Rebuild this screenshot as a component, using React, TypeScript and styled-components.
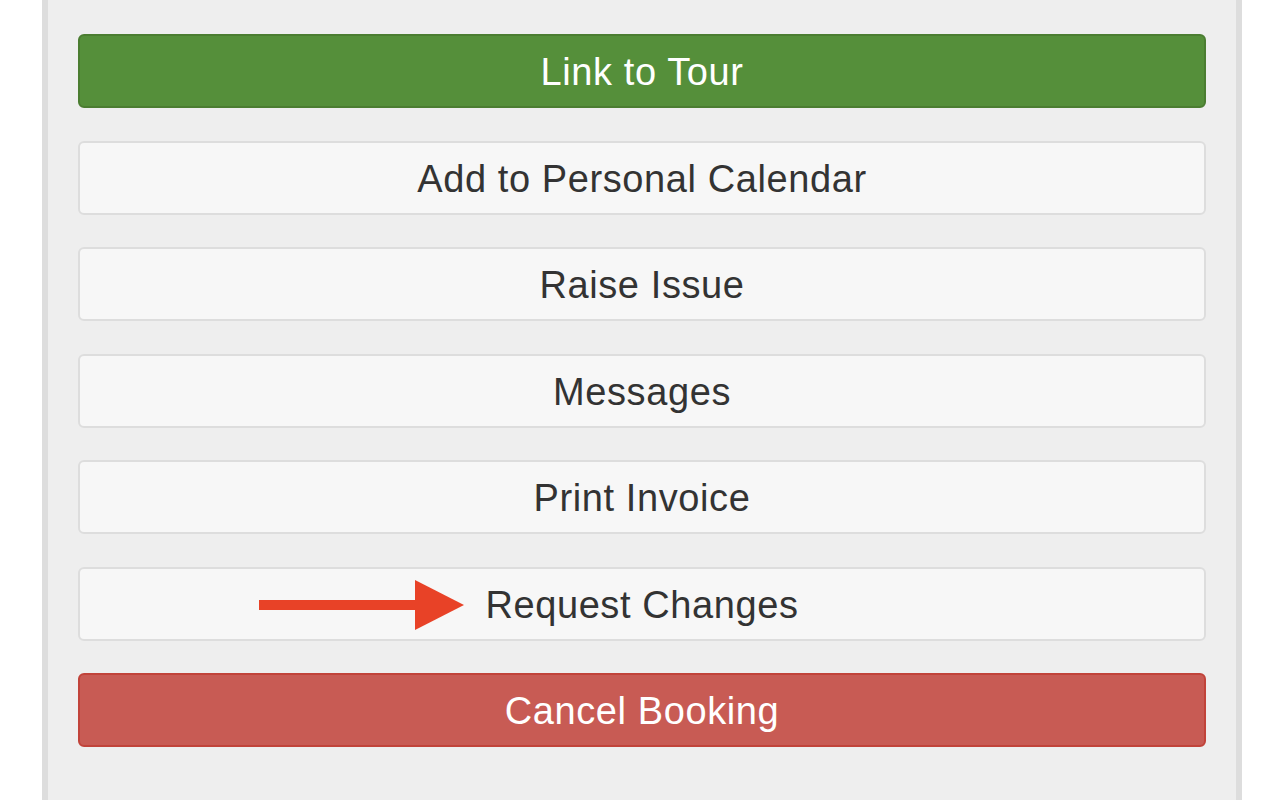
import React from "react";
import styled, { createGlobalStyle } from "styled-components";

const Global = createGlobalStyle`
  html, body { margin: 0; padding: 0; background: #ffffff; }
  body { font-family: "Liberation Sans", Arial, Helvetica, sans-serif; }
`;

const Page = styled.div`
  width: 1284px;
  height: 800px;
  display: flex;
  overflow: hidden;
  padding-left: 42px;
  box-sizing: border-box;
`;

const Panel = styled.div`
  width: 1200px;
  height: 800px;
  box-sizing: border-box;
  background: #eeeeee;
  border-left: 6px solid #dddddd;
  border-right: 6px solid #dddddd;
  padding: 34px 30px 0 30px;
  display: flex;
  flex-direction: column;
  gap: 32.5px;
`;

type Variant = "success" | "default" | "danger";

const Button = styled.div<{ $variant: Variant }>`
  position: relative;
  height: 74px;
  box-sizing: border-box;
  border-radius: 6px;
  border: 2px solid
    ${(p) =>
      p.$variant === "success" ? "#4b7d31" : p.$variant === "danger" ? "#c1433a" : "#dddddd"};
  background: ${(p) =>
    p.$variant === "success" ? "#558f3a" : p.$variant === "danger" ? "#c85b54" : "#f7f7f7"};
  color: ${(p) => (p.$variant === "default" ? "#333333" : "#ffffff")};
  display: flex;
  align-items: center;
  justify-content: center;
  padding-top: 3px;
  font-size: 38px;
  letter-spacing: 0.6px;
`;

const Arrow = styled.svg`
  position: absolute;
  left: 179px;
  top: 10px;
`;

const items: { label: string; variant: Variant; arrow?: boolean }[] = [
  { label: "Link to Tour", variant: "success" },
  { label: "Add to Personal Calendar", variant: "default" },
  { label: "Raise Issue", variant: "default" },
  { label: "Messages", variant: "default" },
  { label: "Print Invoice", variant: "default" },
  { label: "Request Changes", variant: "default", arrow: true },
  { label: "Cancel Booking", variant: "danger" },
];

export default function App() {
  return (
    <>
      <Global />
      <Page>
        <Panel>
          {items.map((it) => (
            <Button key={it.label} $variant={it.variant}>
              {it.arrow && (
                <Arrow width="206" height="52" viewBox="0 0 206 52">
                  <rect x="0" y="21" width="160" height="10" fill="#e84227" />
                  <polygon points="156,1 205,26 156,51" fill="#e84227" />
                </Arrow>
              )}
              {it.label}
            </Button>
          ))}
        </Panel>
      </Page>
    </>
  );
}
